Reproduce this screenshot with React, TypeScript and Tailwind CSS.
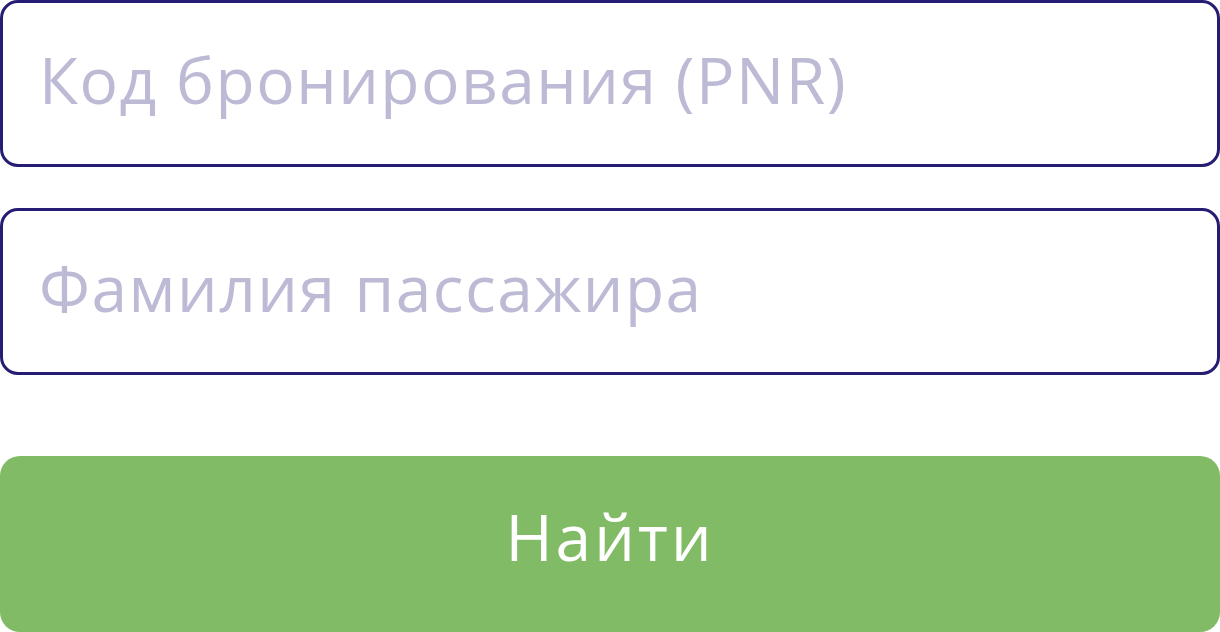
export default function App() {
  return (
    <div className="flex h-[632px] w-[1220px] flex-col bg-white font-['Open_Sans','Noto_Sans',sans-serif] font-normal">
      <input
        type="text"
        placeholder="Код бронирования (PNR)"
        className="h-[167px] w-full rounded-[18px] border-[3px] border-[#251d74] bg-white pb-[8px] pl-[36px] text-[64px] tracking-[1.5px] text-[#251d74] outline-none placeholder:text-[#bdbad5]"
      />
      <input
        type="text"
        placeholder="Фамилия пассажира"
        className="mt-[41px] h-[167px] w-full rounded-[18px] border-[3px] border-[#251d74] bg-white pb-[8px] pl-[36px] text-[64px] tracking-[1.5px] text-[#251d74] outline-none placeholder:text-[#bdbad5]"
      />
      <button
        type="button"
        className="mt-[81px] flex h-[176px] w-full items-center justify-center rounded-[20px] bg-[#82bb65] pb-[14px] text-[64px] tracking-[3px] text-white"
      >
        Найти
      </button>
    </div>
  )
}
